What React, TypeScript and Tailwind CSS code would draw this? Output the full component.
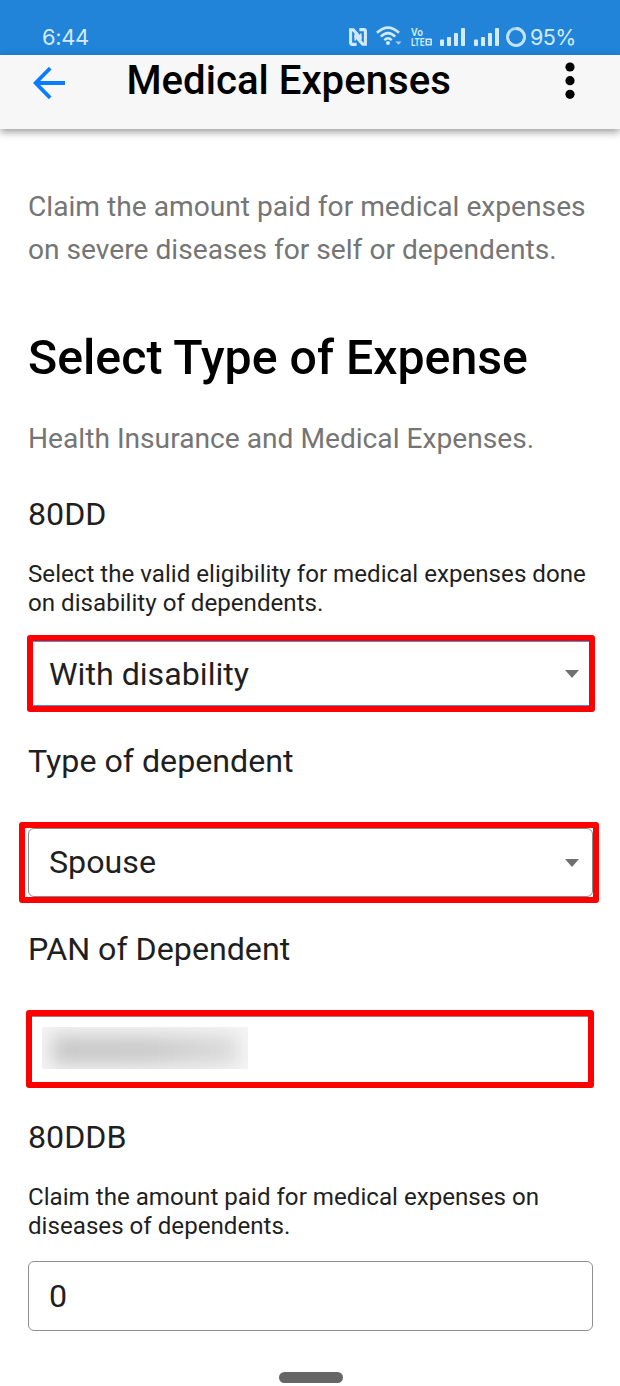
import type { ReactNode } from "react";

function NfcIcon() {
  return (
    <svg width="18" height="18" viewBox="0 0 18 18" fill="none" stroke="#d3eafa">
      <path d="M7.6 16.4H3.2Q1.6 16.4 1.6 14.8V1.7H4.2L12 10.6" strokeWidth="3.1" />
      <path d="M10.4 1.6H14.8Q16.4 1.6 16.4 3.2V16.3H13.8L6 7.4" strokeWidth="3.1" />
      <path d="M6.2 6V12.6M11.8 5.4V12" strokeWidth="1.6" />
    </svg>
  );
}

function WifiIcon() {
  return (
    <svg width="26" height="20" viewBox="0 0 26 20" fill="none" stroke="#d3eafa">
      <path d="M1 6.8Q12 -3.6 23 6.8" strokeWidth="2.6" />
      <path d="M4.8 10.6Q12 3.6 19.2 10.6" strokeWidth="2.6" />
      <path d="M8.3 14.2Q12 10.4 15.7 14.2" strokeWidth="2.4" />
      <circle cx="12" cy="17" r="2" fill="#d3eafa" stroke="none" />
      <path d="M19.5 15.5H25.5L22.5 18.7Z" fill="#a8d3f3" stroke="none" />
    </svg>
  );
}

function SignalIcon() {
  return (
    <svg width="26" height="18" viewBox="0 0 26 18" fill="#d3eafa">
      <rect x="0" y="11.5" width="4" height="6.5" rx="0.8" />
      <rect x="7" y="9" width="4" height="9" rx="0.8" />
      <rect x="14" y="5" width="4" height="13" rx="0.8" />
      <rect x="21" y="0" width="4" height="18" rx="0.8" />
    </svg>
  );
}

function VolteIcon() {
  return (
    <svg width="21" height="20" viewBox="0 0 21 20" fill="#d3eafa" fontFamily="Roboto" fontWeight="600" fontSize="10">
      <text x="0" y="9" textLength="12" lengthAdjust="spacingAndGlyphs">Vo</text>
      <text x="0" y="18.5" textLength="13.5" lengthAdjust="spacingAndGlyphs">LTE</text>
      <path fillRule="evenodd" d="M14.5 11.5H20Q21 11.5 21 12.5V17.5Q21 18.5 20 18.5H14.5ZM16 13V14H18.5V14.6H16V17H19.5V16H17.5V15.4H19.5V13Z" />
    </svg>
  );
}

function StatusBar() {
  return (
    <div className="flex h-[55px] bg-[#2184d9] pl-[42px] text-[#d3eafa]">
      <span className="mt-[24px] w-[307px] font-[Inter] text-[22px] leading-[26px] tracking-[-0.4px]">6:44</span>
      <div className="mt-[28px]"><NfcIcon /></div>
      <div className="mt-[26px] ml-[9px]"><WifiIcon /></div>
      <div className="mt-[27px] ml-[9px]"><VolteIcon /></div>
      <div className="mt-[28px] ml-[8px]"><SignalIcon /></div>
      <div className="mt-[28px] ml-[8px]"><SignalIcon /></div>
      <svg className="mt-[27px] ml-[6px]" width="20" height="20" viewBox="0 0 20 20" fill="none">
        <circle cx="10" cy="10" r="8.5" stroke="#a8d3f3" strokeWidth="2.8" />
        <path d="M10 1.5A8.5 8.5 0 1 1 4 4" stroke="#c3e1f8" strokeWidth="2.8" />
      </svg>
      <span className="mt-[24px] ml-[4px] font-[Inter] text-[21.5px] leading-[26px] tracking-[-0.6px]">95%</span>
    </div>
  );
}

function Header() {
  return (
    <header className="flex h-[74px] bg-[#f7f7f7] pl-[33px] shadow-[0_3px_8px_rgba(0,0,0,0.4)]">
      <svg className="mt-[12px]" width="33" height="33" viewBox="0 0 33 33" fill="none" stroke="#0a7cff" strokeWidth="3.8">
        <path d="M32 16H3M17.2 1.2L2.6 16L17.2 30.8" />
      </svg>
      <h1 className="mt-px ml-[60.5px] w-[437.5px] text-[40.15px] leading-[50px] font-medium text-black">
        Medical Expenses
      </h1>
      <svg className="mt-[7px]" width="12" height="38" viewBox="0 0 12 38">
        <circle cx="6" cy="5" r="4.6" />
        <circle cx="6" cy="18.7" r="4.6" />
        <circle cx="6" cy="32.3" r="4.6" />
      </svg>
    </header>
  );
}

function Label({ children }: { children: ReactNode }) {
  return <h3 className="h-[40px] text-[32.2px] leading-[40px] whitespace-nowrap">{children}</h3>;
}

function Caret() {
  return (
    <svg className="mt-px" width="14" height="8" viewBox="0 0 14 8" fill="#707070">
      <path d="M0 0H14L7 8Z" />
    </svg>
  );
}

export default function App() {
  return (
    <div className="flex h-[1386px] w-[620px] flex-col overflow-hidden bg-white font-[Roboto,sans-serif] text-[#1f1f1f]">
      <StatusBar />
      <Header />
      <main className="flex flex-col px-[28px] pt-[56px]">
        <p className="text-[28.17px] leading-[43px] whitespace-nowrap text-[#757575]">
          Claim the amount paid for medical expenses
          <br />
          on severe diseases for self or dependents.
        </p>
        <h2 className="mt-[57px] text-[48.25px] leading-[60px] font-medium whitespace-nowrap text-black">
          Select Type of Expense
        </h2>
        <p className="mt-[30px] text-[28.17px] leading-[42px] whitespace-nowrap text-[#757575]">
          Health Insurance and Medical Expenses.
        </p>

        <div className="mt-[34px]"><Label>80DD</Label></div>
        <p className="mt-[26px] text-[24.15px] leading-[29px] whitespace-nowrap">
          Select the valid eligibility for medical expenses done
          <br />
          on disability of dependents.
        </p>
        <div className="mt-[17px] -ml-px h-[77px] w-[568px] rounded-[3px] bg-[#ff0000] p-[6px]">
          <div className="flex h-full items-center justify-between border-y border-[#4a8fdc] bg-white pr-[10px] pl-[16px] text-[32.2px]">
            <span className="pt-px">With disability</span>
            <Caret />
          </div>
        </div>

        <div className="mt-[29px]"><Label>Type of dependent</Label></div>
        <div className="mt-[41px] -ml-[9px] h-[81px] w-[580px] rounded-[3px] bg-[#ff0000] p-[6px]">
          <div className="h-full bg-white pl-[3px]">
            <div className="flex h-full items-center justify-between rounded-[6px] border border-[#8a8a8a] pr-[13px] pb-px pl-[20px] text-[32.2px]">
              <span>Spouse</span>
              <Caret />
            </div>
          </div>
        </div>

        <div className="mt-[26px]"><Label>PAN of Dependent</Label></div>
        <div className="mt-[41px] -ml-[2px] h-[78px] w-[568px] rounded-[3px] bg-[#ff0000] p-[6px]">
          <div className="h-full border-t border-[#a08080] bg-white pt-[10px] pl-[10px]">
            {/* redacted PAN */}
            <div className="h-[42px] w-[206px] overflow-hidden bg-[#f5f5f5] px-[10px] pt-[8px] pb-[4px]">
              <div className="h-full bg-linear-to-r from-[#c8c8c8] via-[#cacaca] to-[#dcdcdc] blur-[9px]" />
            </div>
          </div>
        </div>

        <div className="mt-[29px]"><Label>80DDB</Label></div>
        <p className="mt-[26px] text-[24.15px] leading-[29px] whitespace-nowrap">
          Claim the amount paid for medical expenses on
          <br />
          diseases of dependents.
        </p>
        <div className="mt-[20px] flex h-[70px] w-[565px] items-center rounded-[6px] border border-[#8f8f8f] pl-[20px] text-[32.2px]">
          0
        </div>
      </main>
      <div className="mt-[41px] ml-[279px] h-[11px] w-[64px] rounded-full bg-[#666666]" />
    </div>
  );
}
